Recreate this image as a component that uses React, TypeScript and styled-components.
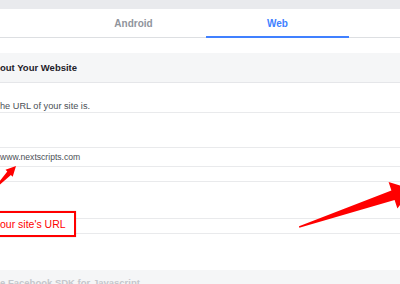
import React from 'react';
import styled, { createGlobalStyle } from 'styled-components';

const GlobalStyle = createGlobalStyle`
  html, body {
    margin: 0;
    padding: 0;
    background: #fff;
    overflow: hidden;
  }
  body {
    font-family: 'Liberation Sans', Arial, sans-serif;
  }
`;

const Page = styled.div`
  position: relative;
  width: 400px;
  height: 284px;
  overflow: hidden;
  display: flex;
  flex-direction: column;
`;

const TopStrip = styled.div`
  height: 9px;
  flex: none;
  background: #e9eaed;
`;

const TabBar = styled.nav`
  display: flex;
  flex: none;
  height: 28px;
  padding-left: 62px;
  gap: 1px;
  border-bottom: 1px solid #dddfe2;
`;

const Tab = styled.div<{ $active?: boolean }>`
  width: 143px;
  display: flex;
  align-items: center;
  justify-content: center;
  padding-top: 1px;
  box-sizing: border-box;
  font-size: 10px;
  font-weight: 700;
  color: ${(p) => (p.$active ? '#4080ff' : '#90949c')};
  border-bottom: 2px solid ${(p) => (p.$active ? '#4080ff' : 'transparent')};
  margin-bottom: -1px;
`;

const Spacer = styled.div<{ $h: number }>`
  height: ${(p) => p.$h}px;
  flex: none;
`;

const SectionHeader = styled.div`
  height: 29px;
  flex: none;
  display: flex;
  align-items: center;
  background: #f5f6f7;
  border-bottom: 1px solid #e5e6e9;
  font-size: 9.5px;
  font-weight: 700;
  color: #1d2129;
  white-space: nowrap;
`;

const Row = styled.div<{ $h: number; $size?: number; $bottom?: boolean }>`
  height: ${(p) => p.$h}px;
  flex: none;
  display: flex;
  align-items: ${(p) => (p.$bottom ? 'flex-end' : 'center')};
  padding-bottom: ${(p) => (p.$bottom ? 1 : 0)}px;
  border-bottom: 1px solid #e9eaec;
  font-size: ${(p) => p.$size ?? 9}px;
  color: #4b4f56;
  white-space: nowrap;
`;

const FooterSection = styled.div`
  flex: 1;
  background: #f5f6f7;
  padding-top: 7px;
  font-size: 9.5px;
  font-weight: 700;
  color: #c4c7cc;
  white-space: nowrap;
`;

const Callout = styled.div`
  position: absolute;
  left: -6px;
  top: 211px;
  width: 74px;
  height: 22px;
  border: 2px solid #ff0000;
  background: #fff;
  box-shadow: 0 0 1px rgba(0, 0, 0, 0.3);
  display: flex;
  align-items: center;
  padding-left: 4px;
  font-size: 10.5px;
  color: #ff0000;
  white-space: nowrap;
`;

const Overlay = styled.svg`
  position: absolute;
  left: 0;
  top: 0;
  pointer-events: none;
`;

export default function App() {
  return (
    <>
      <GlobalStyle />
      <Page>
        <TopStrip />
        <TabBar>
          <Tab>Android</Tab>
          <Tab $active>Web</Tab>
        </TabBar>
        <Spacer $h={15} />
        <SectionHeader>out Your Website</SectionHeader>
        <Row $h={28} $size={9.2} $bottom>
          he URL of your site is.
        </Row>
        <Row $h={34} />
        <Row $h={18} $size={8.6}>
          www.nextscripts.com
        </Row>
        <Row $h={14} />
        <Row $h={36} />
        <Row $h={14} />
        <Spacer $h={36} />
        <FooterSection>e Facebook SDK for Javascript</FooterSection>

        <Callout>our site's URL</Callout>

        <Overlay width="400" height="284" viewBox="0 0 400 284">
          <polygon
            fill="#ff0000"
            points="16,166 5.5,169.7 7.3,171.5 -5.5,187.5 -4.5,188.5 10.9,174.9 12.7,176.7"
          />
          <polygon
            fill="#ff0000"
            points="412,189 388.6,182 391.4,190.6 299,226.3 299.3,227.7 394.6,200 397.4,208.6"
          />
        </Overlay>
      </Page>
    </>
  );
}
